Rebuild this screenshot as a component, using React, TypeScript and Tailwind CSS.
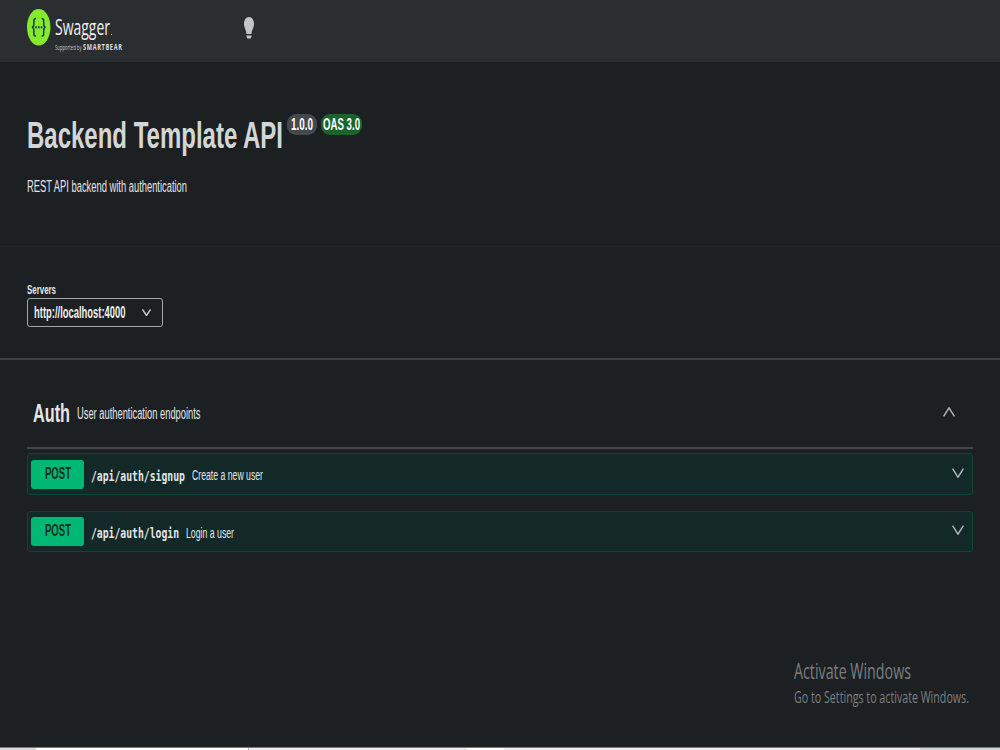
import { useLayoutEffect, useRef, useState } from "react";

type FitProps = {
  text: string;
  width: number;
  className?: string;
};

// Single line of text condensed (or stretched) to a given width
const Fit = ({ text, width, className = "" }: FitProps) => {
  const ref = useRef<HTMLSpanElement>(null);
  const [scale, setScale] = useState(1);

  useLayoutEffect(() => {
    if (ref.current) setScale(width / ref.current.getBoundingClientRect().width * scale);
  }, [text, width]);

  return (
    <span className={`block shrink-0 ${className}`} style={{ width }}>
      <span
        ref={ref}
        className="inline-block origin-left whitespace-nowrap align-top"
        style={{ transform: `scaleX(${scale})` }}
      >
        {text}
      </span>
    </span>
  );
};

const Chevron = ({ className = "" }: { className?: string }) => (
  <svg
    className={className}
    viewBox="0 0 12 10"
    preserveAspectRatio="none"
    fill="none"
    stroke="currentColor"
    strokeWidth="1.4"
  >
    <path d="M0.6 0.6 L6 9.2 L11.4 0.6" />
  </svg>
);

const Logo = () => (
  <div className="flex h-[62px] w-[130px] items-start pl-[27px] font-['Open_Sans',sans-serif]">
    <svg className="mt-[9px] h-[37px] w-[24px] shrink-0" viewBox="27 9 24 37">
      <ellipse cx="38.7" cy="27.3" rx="11.7" ry="18.3" fill="#85ea2d" />
      <g fill="none" stroke="#173647" strokeWidth="1.5">
        <path d="M36 18.6 C33.6 18.4 33.8 20.5 33.9 23 C34 25.8 33.6 27 32 27.3 C33.6 27.6 34 28.8 33.9 31.6 C33.8 34.1 33.6 36.2 36 36" />
        <path d="M41.6 18.6 C44 18.4 43.8 20.5 43.7 23 C43.6 25.8 44 27 45.6 27.3 C44 27.6 43.6 28.8 43.7 31.6 C43.8 34.1 44 36.2 41.6 36" />
      </g>
      <g fill="#173647">
        <ellipse cx="36" cy="27.3" rx="0.8" ry="1.2" />
        <ellipse cx="38.8" cy="27.3" rx="0.8" ry="1.2" />
        <ellipse cx="41.6" cy="27.3" rx="0.8" ry="1.2" />
      </g>
    </svg>
    <div className="ml-[3.5px] mt-[15px]">
      <div className="flex items-start">
        <Fit text="Swagger" width={55} className="text-[22.5px] leading-[24px] text-[#f0f0f0]" />
        <span className="ml-px mt-[19px] size-px bg-[#b5b7b8]" />
      </div>
      <div className="mt-[2px] flex items-start">
        <Fit text="Supported by" width={26.5} className="text-[7.5px] leading-[12px] text-[#c5c7c8]" />
        <Fit
          text="SMARTBEAR"
          width={39.5}
          className="ml-[2px] text-[9px] font-bold leading-[12px] tracking-[1px] text-[#dddddd]"
        />
      </div>
    </div>
  </div>
);

const Bulb = () => (
  <svg className="h-[22px] w-[10px]" viewBox="0 0 10 22" fill="#c3c5c6">
    <path d="M5 0 C2 0 0 3 0 7 C0 11 2.2 12.5 2.5 17 H7.5 C7.8 12.5 10 11 10 7 C10 3 8 0 5 0 Z" />
    <path d="M2.5 18.4 H7.5 V19.6 L6.6 21.6 H3.4 L2.5 19.6 Z" />
  </svg>
);

type OperationProps = {
  path: string;
  pathWidth: number;
  summary: string;
  summaryWidth: number;
  className?: string;
};

const Operation = ({ path, pathWidth, summary, summaryWidth, className = "" }: OperationProps) => (
  <div className={`flex items-center rounded-[3px] border border-[#0f4534] bg-[#122928] pl-[3px] pr-[8px] ${className}`}>
    <div className="flex h-[29px] w-[53px] justify-center rounded-[3px] bg-[#00b873] pt-[4px]">
      <Fit text="POST" width={26} className="text-[16px] font-bold leading-[20px] text-[#0d2f26]" />
    </div>
    <Fit
      text={path}
      width={pathWidth}
      className="ml-[7px] mt-[3px] font-['DejaVu_Sans_Mono',monospace] text-[14.5px] font-bold leading-[20px] text-[#e4e6e6]"
    />
    <Fit text={summary} width={summaryWidth} className="ml-[7px] mt-[2px] text-[15.5px] leading-[20px] text-[#e4e6e6]" />
    <Chevron className="-mt-[3px] ml-auto h-[10px] w-[12px] text-[#b4b9ba]" />
  </div>
);

const App = () => {
  return (
    <div className="relative flex h-[750px] w-[1000px] flex-col overflow-hidden bg-[#1c2022] font-['Liberation_Sans',Arial,sans-serif] text-[#e4e6e6]">
      <header className="flex h-[62px] shrink-0 items-start bg-[#2b2e30]">
        <Logo />
        <div className="ml-[113.5px] mt-[17px]">
          <Bulb />
        </div>
      </header>

      <section className="h-[185px] shrink-0 border-b border-[#212527] px-[27px] pt-[52px]">
        <div className="flex items-start">
          <h1 className="mt-[2px]">
            <Fit text="Backend Template API" width={256} className="text-[37px] font-bold leading-[40px] text-[#d3d6d7]" />
          </h1>
          <div className="ml-[4px] flex h-[21px] w-[30px] justify-center rounded-[9px] bg-[#43494d]">
            <Fit text="1.0.0" width={22} className="text-[16px] font-bold leading-[22px] text-white" />
          </div>
          <div className="ml-[4px] flex h-[21px] w-[41px] justify-center rounded-[9px] bg-[#1b632a]">
            <Fit text="OAS 3.0" width={37} className="text-[16px] font-bold leading-[22px] text-white" />
          </div>
        </div>
        <Fit text="REST API backend with authentication" width={160} className="mt-[21px] text-[16px] leading-[20px]" />
      </section>

      <section className="h-[113px] shrink-0 border-b-2 border-[#3d4144] px-[27px] pt-[35px]">
        <Fit text="Servers" width={29} className="text-[12.5px] font-bold leading-[16px]" />
        <div className="flex h-[29px] w-[136px] items-center rounded-[3px] border border-[#a3a7a9] pl-[6px] pr-[11px]">
          <Fit text="http://localhost:4000" width={91.5} className="mt-px text-[16px] font-bold leading-[20px] text-[#f0f0f0]" />
          <Chevron className="ml-auto h-[7px] w-[9px] stroke-[2] text-[#c8cbcc]" />
        </div>
      </section>

      <main className="flex flex-col px-[27px]">
        <div className="flex h-[89px] items-start border-b-2 border-[#43474b] pl-[6px] pr-[18px] pt-[38px]">
          <Fit text="Auth" width={37} className="text-[25.5px] font-bold leading-[30px]" />
          <Fit text="User authentication endpoints" width={123.5} className="ml-[7px] mt-[6px] text-[16px] leading-[20px]" />
          <Chevron className="ml-auto mt-[9px] h-[10px] w-[12px] rotate-180 text-[#b4b9ba]" />
        </div>
        <Operation
          path="/api/auth/signup"
          pathWidth={94}
          summary="Create a new user"
          summaryWidth={71}
          className="mt-[4px] h-[42px]"
        />
        <Operation
          path="/api/auth/login"
          pathWidth={88}
          summary="Login a user"
          summaryWidth={48}
          className="mt-[16px] h-[41px]"
        />
      </main>

      {/* system watermark */}
      <div className="absolute left-[794px] top-[655px] font-['Open_Sans',sans-serif] text-[#7b7e7f]">
        <Fit text="Activate Windows" width={117} className="text-[22px] leading-[30px]" />
        <Fit text="Go to Settings to activate Windows." width={175} className="text-[17px] leading-[24px]" />
      </div>

      {/* top edge of the taskbar */}
      <div className="mt-auto flex h-[3px] border-t border-[#777a7b] bg-[#ededed]">
        <div className="w-[36px] bg-[#dcd8de]" />
        <div className="w-[212px] bg-white" />
        <div className="w-px bg-[#b5b5b5]" />
        <div className="ml-[218px] w-[37px] bg-white" />
        <div className="ml-auto w-[80px] bg-[#ccd3d5]" />
      </div>
    </div>
  );
};

export default App;
